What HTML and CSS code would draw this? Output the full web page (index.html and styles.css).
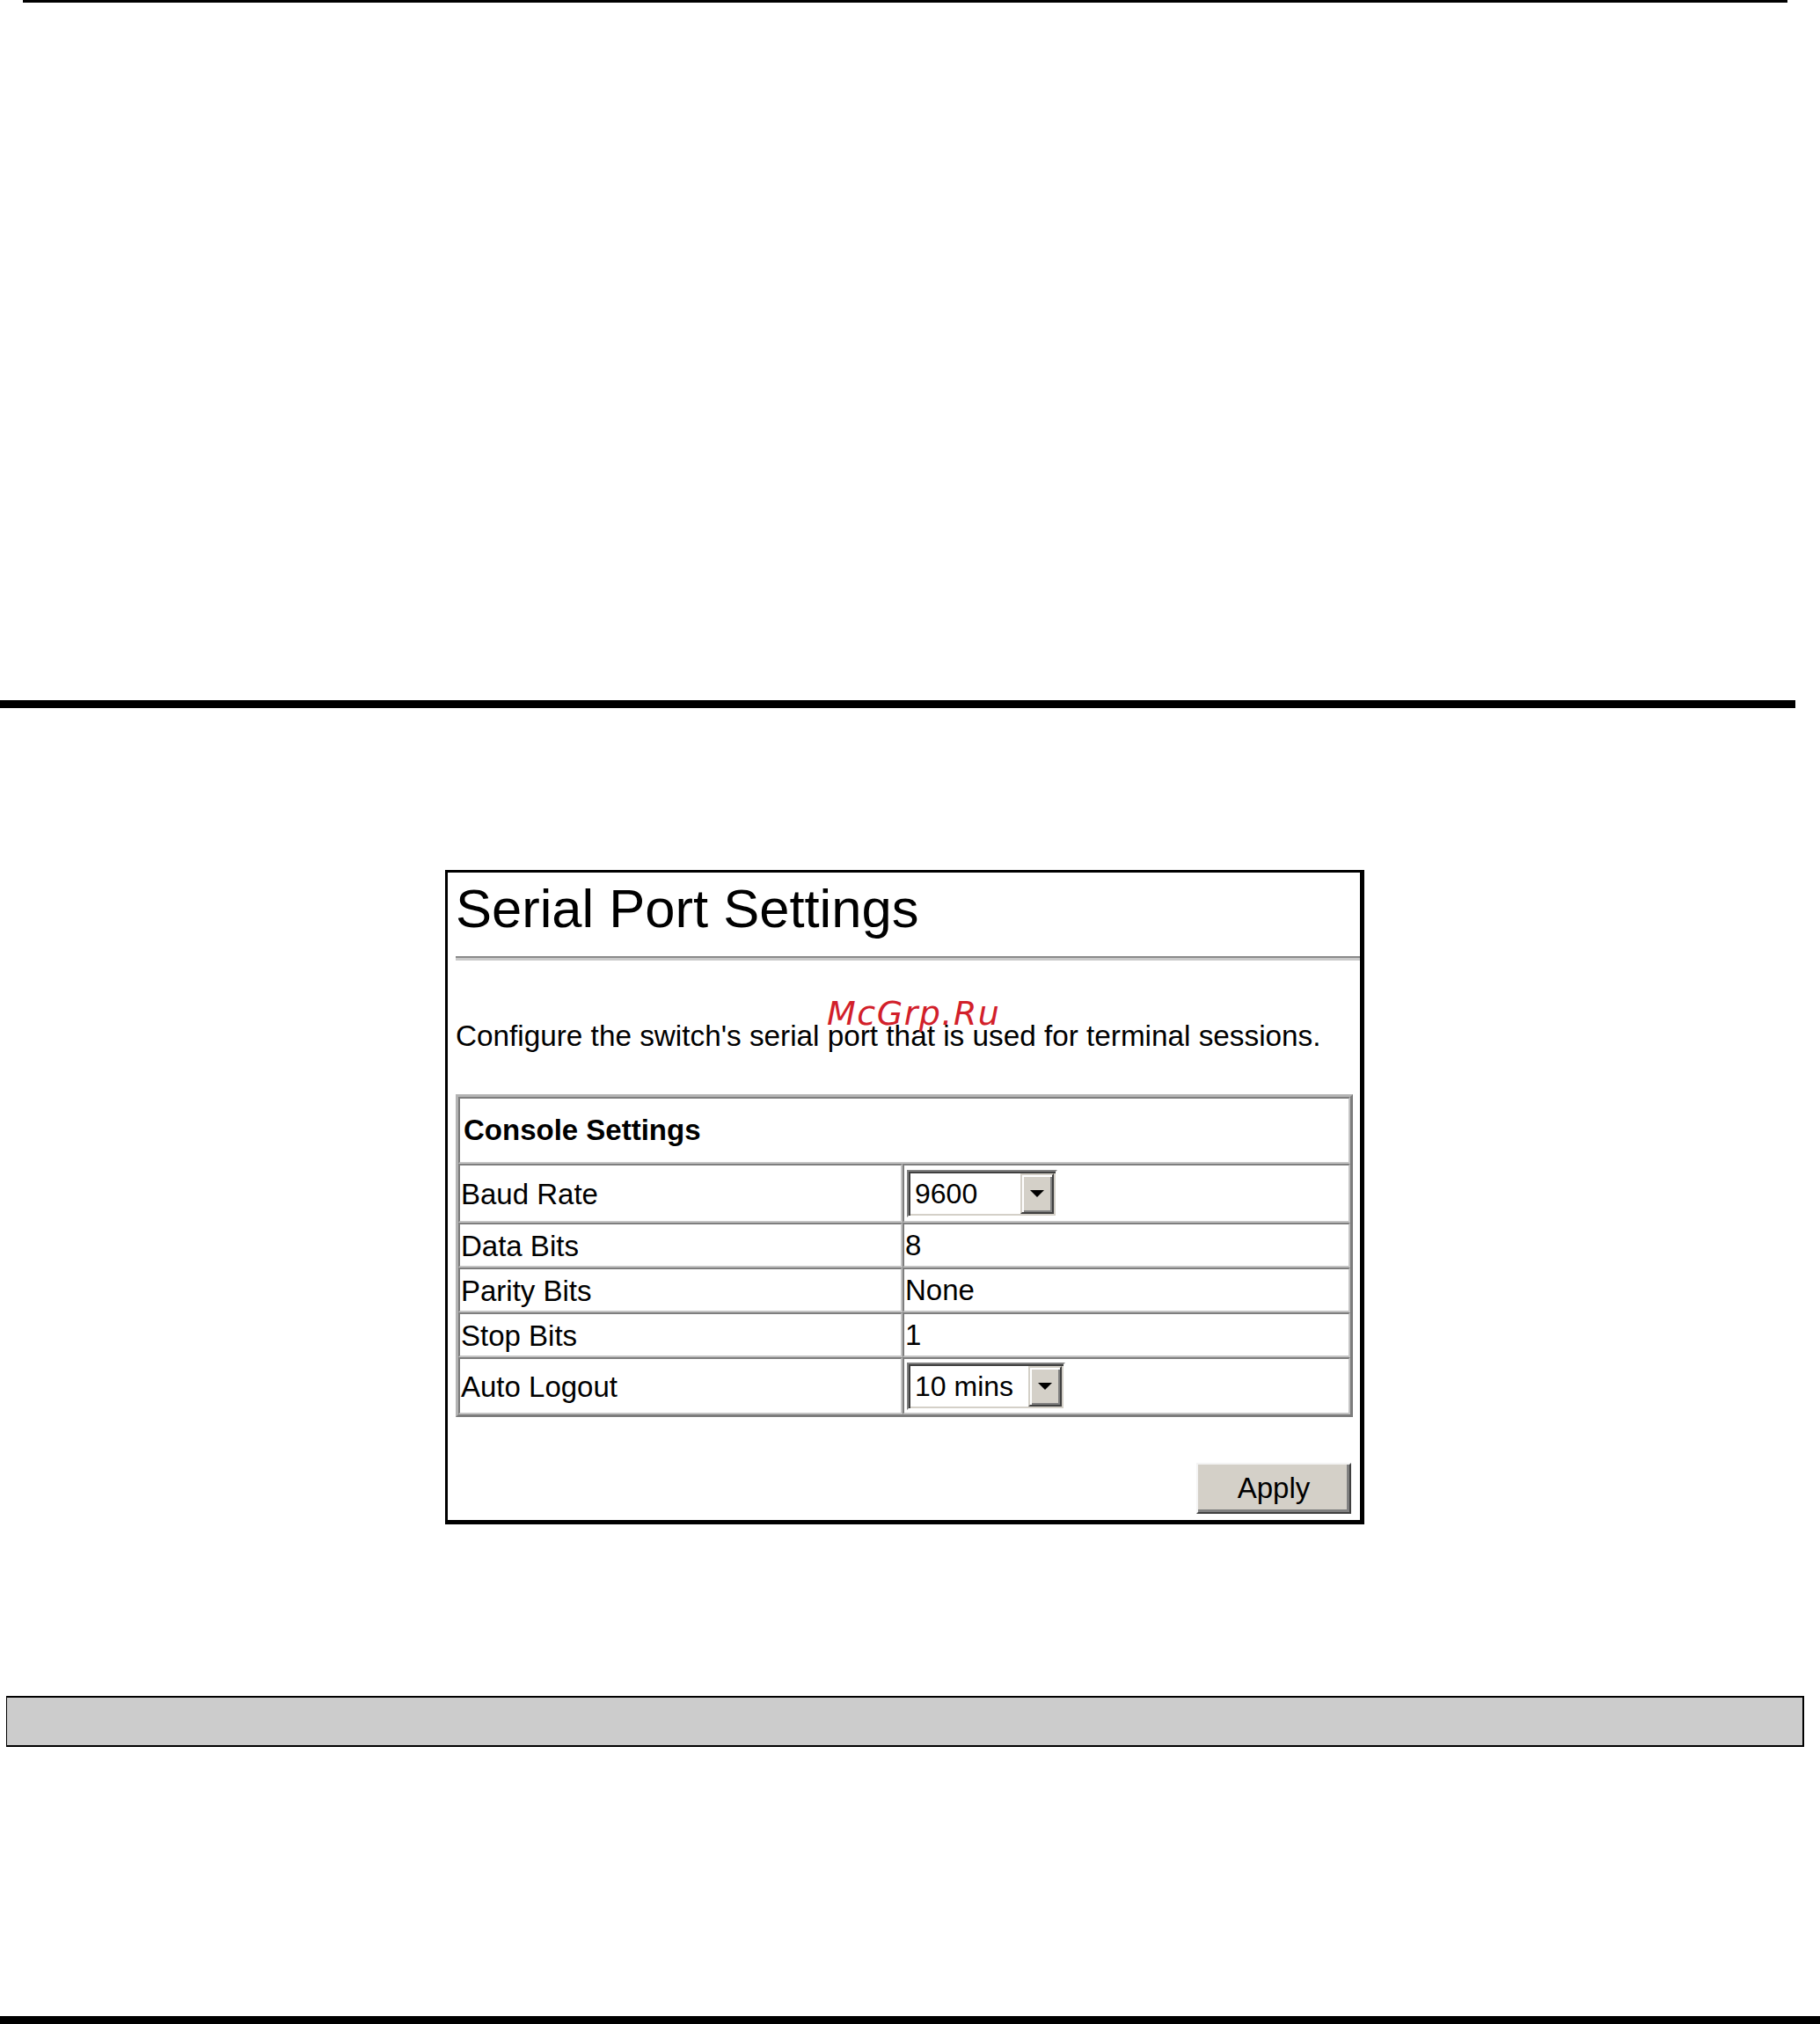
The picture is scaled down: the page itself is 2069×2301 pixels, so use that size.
FILE: index.html
```html
<!DOCTYPE html>
<html lang="en">
<head>
<meta charset="utf-8">
<title>Serial Port Settings</title>
<link rel="stylesheet" href="styles.css">
</head>
<body>
<div class="page">
  <div class="rule-top"></div>
  <div class="rule-thick"></div>

  <section class="panel">
    <h1 class="title">Serial Port Settings</h1>
    <div class="title-rule"></div>
    <p class="desc">Configure the switch's serial port that is used for terminal sessions.</p>

    <table class="settings">
      <colgroup>
        <col class="col-label">
        <col class="col-value">
      </colgroup>
      <tr class="row-head">
        <th colspan="2">Console Settings</th>
      </tr>
      <tr class="row-tall">
        <td class="label">Baud Rate</td>
        <td class="value">
          <div class="select sel-baud">
            <span class="sel-text">9600</span>
            <span class="sel-btn"><span class="arrow"></span></span>
          </div>
        </td>
      </tr>
      <tr class="row">
        <td class="label">Data Bits</td>
        <td class="value">8</td>
      </tr>
      <tr class="row">
        <td class="label">Parity Bits</td>
        <td class="value">None</td>
      </tr>
      <tr class="row">
        <td class="label">Stop Bits</td>
        <td class="value">1</td>
      </tr>
      <tr class="row-last">
        <td class="label">Auto Logout</td>
        <td class="value">
          <div class="select sel-logout">
            <span class="sel-text">10 mins</span>
            <span class="sel-btn"><span class="arrow"></span></span>
          </div>
        </td>
      </tr>
    </table>

    <div class="actions">
      <button class="apply" type="button">Apply</button>
    </div>
  </section>

  <div class="gray-bar"></div>
  <div class="rule-bottom"></div>

  <div class="watermark">McGrp.Ru</div>
</div>
</body>
</html>
```

FILE: styles.css
```css
html, body {
  margin: 0;
  padding: 0;
  background: #ffffff;
}

.page {
  position: relative;
  width: 2069px;
  height: 2301px;
  font-family: "Liberation Sans", Arial, sans-serif;
  color: #000;
  overflow: hidden;
}

.rule-top {
  margin-left: 26px;
  width: 2006px;
  height: 3px;
  background: #000;
}

.rule-thick {
  margin-top: 793px;
  width: 2041px;
  height: 9px;
  background: #000;
}

.panel {
  box-sizing: border-box;
  margin-top: 184px;
  margin-left: 506px;
  width: 1045px;
  height: 744px;
  border-style: solid;
  border-color: #000;
  border-width: 3px 5px 5px 3px;
  padding: 0 0 8px 9px;
  display: flex;
  flex-direction: column;
}

.title {
  margin: 11px 0 0 0;
  font-size: 61.5px;
  line-height: 60px;
  font-weight: normal;
  letter-spacing: 0;
}

.title-rule {
  margin-top: 24px;
  height: 0;
  border-top: 2px solid #8a8a8a;
  border-bottom: 3px solid #c9c9c9;
}

.desc {
  margin: 69px 0 0 0;
  font-size: 33.3px;
  line-height: 33px;
  white-space: nowrap;
}

.settings {
  margin-top: 50px;
  width: 1020px;
  table-layout: fixed;
  border-collapse: separate;
  border-spacing: 0;
  border-style: solid;
  border-width: 3px;
  border-color: #b4b4b4 #7c7c7c #7c7c7c #b4b4b4;
  font-size: 33px;
}

.col-label {
  width: 505px;
}

.settings th,
.settings td {
  border-style: solid;
  border-width: 2px;
  border-color: #7e7e7e #c4c4c4 #c4c4c4 #7e7e7e;
  padding: 0 0 0 1px;
  vertical-align: middle;
  text-align: left;
  white-space: nowrap;
  line-height: 38px;
}

.settings th {
  font-size: 33px;
  font-weight: bold;
  padding-left: 4px;
}

.row-head { height: 76px; }
.row-tall { height: 67px; }
.row { height: 51px; }
.row-last { height: 65px; }

.settings td.label {
  padding-top: 2px;
}

.settings td.value {
  padding-left: 1px;
}

.select {
  box-sizing: border-box;
  display: flex;
  align-items: stretch;
  height: 54px;
  margin-left: 2px;
  background: #fff;
  border-style: solid;
  border-width: 2px;
  border-color: #808080 #ffffff #ffffff #808080;
  box-shadow: inset 2px 2px 0 #404040, inset -2px -2px 0 #d4d0c8;
  font-size: 32px;
}

.sel-baud { width: 171px; }
.sel-logout { width: 180px; }

.sel-text {
  flex: 1;
  display: flex;
  align-items: center;
  padding-left: 7px;
  line-height: 1;
}

.sel-btn {
  box-sizing: border-box;
  width: 38px;
  margin: 2px 2px 2px 0;
  background: #d4d0c8;
  border-style: solid;
  border-width: 2px;
  border-color: #d4d0c8 #404040 #404040 #d4d0c8;
  box-shadow: inset 2px 2px 0 #ffffff, inset -2px -2px 0 #808080;
  display: flex;
  align-items: center;
  justify-content: center;
}

.arrow {
  width: 0;
  height: 0;
  border-left: 8px solid transparent;
  border-right: 8px solid transparent;
  border-top: 8px solid #000;
}

.actions {
  width: 1020px;
  margin-top: 52px;
  display: flex;
  justify-content: flex-end;
}

.apply {
  box-sizing: border-box;
  width: 176px;
  height: 58px;
  margin-right: 2px;
  padding: 0;
  background: #d4d0c8;
  color: #000;
  font-family: "Liberation Sans", Arial, sans-serif;
  font-size: 33px;
  border-style: solid;
  border-width: 2px;
  border-color: #f4f4f4 #404040 #404040 #f4f4f4;
  box-shadow: inset -3px -3px 0 #808080;
  border-radius: 0;
}

.gray-bar {
  box-sizing: border-box;
  margin-top: 195px;
  margin-left: 7px;
  width: 2044px;
  height: 58px;
  background: #cccccc;
  border-style: solid;
  border-color: #000;
  border-width: 2px 2px 2px 1px;
}

.rule-bottom {
  margin-top: 306px;
  width: 2069px;
  height: 9px;
  background: #000;
}

.watermark {
  position: absolute;
  left: 940px;
  top: 1133px;
  font-family: "DejaVu Sans", "Liberation Sans", sans-serif;
  font-style: italic;
  font-size: 38px;
  line-height: 38px;
  letter-spacing: 1.5px;
  color: #d2202a;
  white-space: nowrap;
}
```
